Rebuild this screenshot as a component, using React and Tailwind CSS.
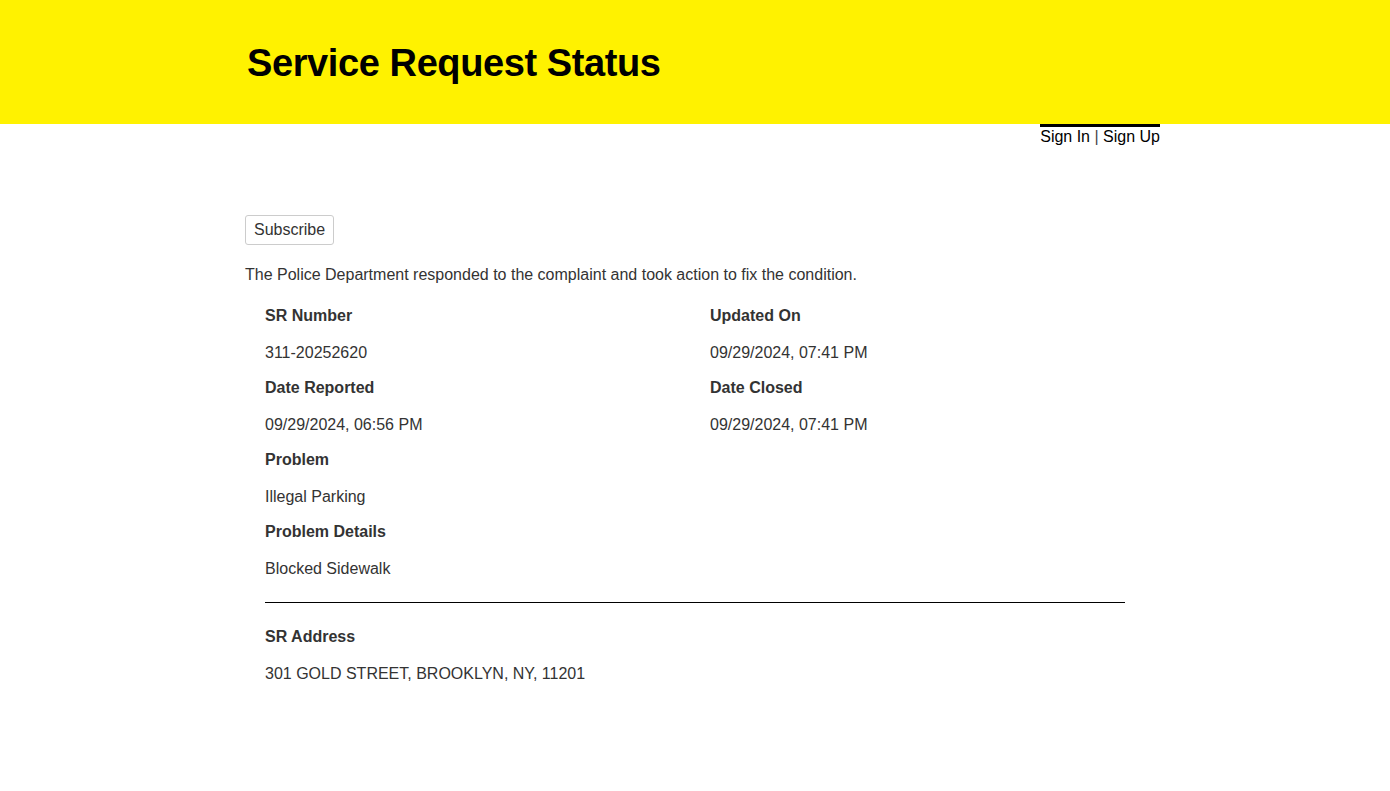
import React from 'react'

const rows = [
  [
    { label: 'SR Number', value: '311-20252620' },
    { label: 'Updated On', value: '09/29/2024, 07:41 PM' },
  ],
  [
    { label: 'Date Reported', value: '09/29/2024, 06:56 PM' },
    { label: 'Date Closed', value: '09/29/2024, 07:41 PM' },
  ],
  [{ label: 'Problem', value: 'Illegal Parking' }, null],
  [{ label: 'Problem Details', value: 'Blocked Sidewalk' }, null],
]

function Field({ label, value }) {
  return (
    <div>
      <h4 className="font-bold leading-6">{label}</h4>
      <p className="mt-[13px] leading-6">{value}</p>
    </div>
  )
}

export default function App() {
  return (
    <div className="min-h-[791px] bg-white text-[16px] text-[#333]" style={{ fontFamily: '"Liberation Sans", Arial, sans-serif' }}>
      <header className="h-[124px] bg-[#fff200] pl-[247px] pt-[39px]">
        <h1 className="text-[38px] leading-[48px] font-bold text-black tracking-[-0.4px]">Service Request Status</h1>
      </header>

      <div className="w-[915px] ml-[245px]">
        <div className="flex justify-end">
          <div className="border-t-[3px] border-black text-black leading-[20px]">
            Sign In <span className="text-[#444]">|</span> Sign Up
          </div>
        </div>

        <button className="mt-[68px] h-[30px] px-[8px] border border-[#ccc] rounded-[3px] bg-white text-[#333] leading-6">
          Subscribe
        </button>

        <p className="mt-[18px] leading-6">
          The Police Department responded to the complaint and took action to fix the condition.
        </p>

        <div className="pl-[20px] mt-[17px]">
          <div className="flex flex-col gap-y-[11px]">
            {rows.map((row, i) => (
              <div key={i} className="grid grid-cols-[445px_445px]">
                {row.map((f, j) => (f ? <Field key={j} {...f} /> : <div key={j} />))}
              </div>
            ))}
          </div>

          <hr className="mt-[21px] w-[860px] border-0 border-t border-black" />

          <div className="mt-[22px]">
            <Field label="SR Address" value="301 GOLD STREET, BROOKLYN, NY, 11201" />
          </div>
        </div>
      </div>
    </div>
  )
}
